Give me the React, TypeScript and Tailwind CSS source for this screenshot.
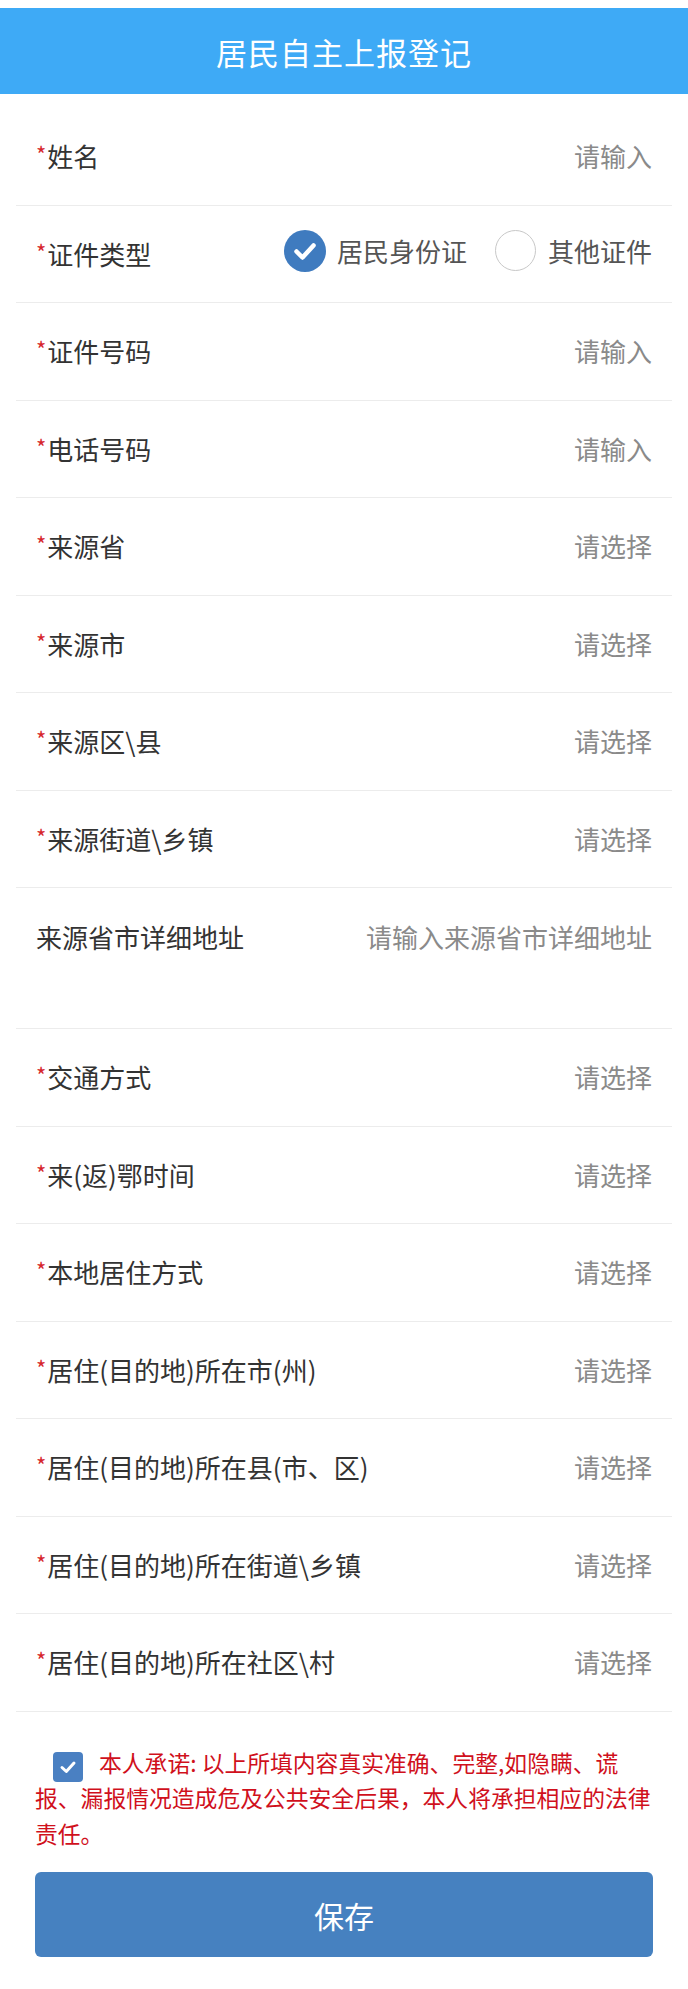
import React from "react";

const FONT = { fontFamily: '"Noto Sans CJK SC", "Noto Sans", sans-serif' };

type Row = { label: string; value: string; required?: boolean; tall?: boolean };

const rowsBefore: Row[] = [
  { label: "证件号码", value: "请输入", required: true },
  { label: "电话号码", value: "请输入", required: true },
  { label: "来源省", value: "请选择", required: true },
  { label: "来源市", value: "请选择", required: true },
  { label: "来源区\\县", value: "请选择", required: true },
  { label: "来源街道\\乡镇", value: "请选择", required: true },
  { label: "来源省市详细地址", value: "请输入来源省市详细地址", tall: true },
  { label: "交通方式", value: "请选择", required: true },
  { label: "来(返)鄂时间", value: "请选择", required: true },
  { label: "本地居住方式", value: "请选择", required: true },
  { label: "居住(目的地)所在市(州)", value: "请选择", required: true },
  { label: "居住(目的地)所在县(市、区)", value: "请选择", required: true },
  { label: "居住(目的地)所在街道\\乡镇", value: "请选择", required: true },
  { label: "居住(目的地)所在社区\\村", value: "请选择", required: true },
];

function Label({ text, required }: { text: string; required?: boolean }) {
  return (
    <div className="flex items-center text-[26px] leading-none text-[#333333] whitespace-nowrap">
      {required ? (
        <span className="relative -top-[3px] mr-[1px] text-[22px] text-[#d6262c]">*</span>
      ) : null}
      <span>{text}</span>
    </div>
  );
}

function FormRow({ row }: { row: Row }) {
  if (row.tall) {
    return (
      <div className="flex h-[141px] items-start justify-between border-b border-[#ececec] px-[20px] pt-[36px]">
        <Label text={row.label} required={row.required} />
        <div className="text-[26px] leading-none text-[#8a8a8a] whitespace-nowrap">{row.value}</div>
      </div>
    );
  }
  return (
    <div className="flex h-[97.5px] items-center justify-between border-b border-[#ececec] px-[20px]">
      <Label text={row.label} required={row.required} />
      <div className="text-[26px] leading-none text-[#8a8a8a] whitespace-nowrap">{row.value}</div>
    </div>
  );
}

export default function App() {
  return (
    <div className="min-h-[1989px] w-[688px] bg-white" style={FONT}>
      <div className="h-[8px] bg-white" />
      <div className="flex h-[86px] items-center justify-center bg-[#3eaaf6]">
        <h1 className="text-[31px] font-normal leading-none tracking-[1px] text-white">居民自主上报登记</h1>
      </div>

      <div className="px-[16px] pt-[14px]">
        <FormRow row={{ label: "姓名", value: "请输入", required: true }} />

        <div className="flex h-[97.5px] items-center justify-between border-b border-[#ececec] px-[20px]">
          <Label text="证件类型" required />
          <div className="flex items-center">
            <div className="flex items-center">
              <svg width="42" height="42" viewBox="0 0 42 42" className="mr-[11px] -mt-[6px]">
                <circle cx="21" cy="21" r="21" fill="#3f7bbf" />
                <path d="M12.5 21.5 L18.5 27.5 L29.5 15.5" fill="none" stroke="#ffffff" strokeWidth="4.5" strokeLinecap="round" strokeLinejoin="round" />
              </svg>
              <span className="-mt-[6px] text-[26px] leading-none text-[#555555]">居民身份证</span>
            </div>
            <div className="ml-[28px] flex items-center">
              <span className="mr-[12px] -mt-[6px] inline-block h-[41px] w-[41px] rounded-full border-[1.5px] border-[#c8c8c8] bg-white" />
              <span className="-mt-[6px] text-[26px] leading-none text-[#555555]">其他证件</span>
            </div>
          </div>
        </div>

        {rowsBefore.map((r) => (
          <FormRow key={r.label} row={r} />
        ))}
      </div>

      <div className="px-[35px] pt-[33px]">
        <p className="whitespace-nowrap text-[22.8px] leading-[35.5px] text-[#d0101c]">
          <span className="ml-[18px] mr-[16px] inline-flex h-[30px] w-[30px] translate-y-[5px] items-center justify-center rounded-[4px] bg-[#4a80c2]">
            <svg width="20" height="20" viewBox="0 0 20 20">
              <path d="M4 10.5 L8.3 14.5 L16 6" fill="none" stroke="#ffffff" strokeWidth="3" strokeLinecap="round" strokeLinejoin="round" />
            </svg>
          </span>
          本人承诺: 以上所填内容真实准确、完整,如隐瞒、谎
          <br />
          报、漏报情况造成危及公共安全后果，本人将承担相应的法律
          <br />
          责任。
        </p>
      </div>

      <div className="px-[35px] pt-[21px]">
        <button className="flex h-[85px] w-full items-center justify-center rounded-[6px] bg-[#4681c0] text-[30px] leading-none text-white">
          保存
        </button>
      </div>
    </div>
  );
}
